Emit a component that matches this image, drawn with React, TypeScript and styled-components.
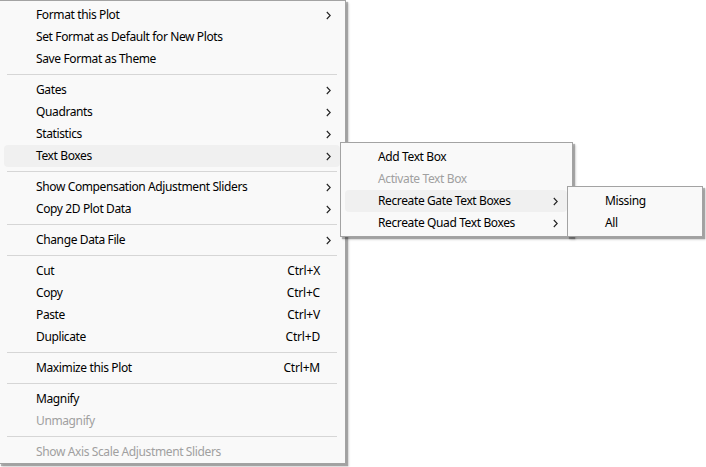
import React from "react";
import styled, { createGlobalStyle } from "styled-components";

const Global = createGlobalStyle`
  html, body { margin: 0; padding: 0; background: #ffffff; }
  body { width: 706px; height: 467px; overflow: hidden; }
  * { box-sizing: border-box; }
`;

const Canvas = styled.div`
  position: relative;
  width: 706px;
  height: 467px;
  background: #ffffff;
  font-family: "Segoe UI", "Noto Sans", "Open Sans", sans-serif;
  font-size: 12px;
  color: #000;
`;

const Menu = styled.div<{ $left: number; $top: number; $width: number; $pb?: number }>`
  position: absolute;
  left: ${(p) => p.$left}px;
  top: ${(p) => p.$top}px;
  width: ${(p) => p.$width}px;
  background: #f9f9f9;
  border: 1px solid #a3a3a3;
  box-shadow: 2px 2px 1px rgba(0, 0, 0, 0.28), 3px 3px 2px rgba(0, 0, 0, 0.12);
  padding: 3px 0 ${(p) => p.$pb ?? 0}px 0;
  display: flex;
  flex-direction: column;
`;

const Row = styled.div<{ $active?: boolean; $disabled?: boolean; $indent: number }>`
  height: 22px;
  margin: 0 5px 0 4px;
  border-radius: 4px;
  display: grid;
  grid-template-columns: 1fr auto 12px;
  align-items: center;
  padding-left: ${(p) => p.$indent}px;
  padding-right: 8px;
  background: ${(p) => (p.$active ? "#f0f0f0" : "transparent")};
  color: ${(p) => (p.$disabled ? "#a0a0a0" : "#000")};
  white-space: nowrap;
  line-height: 22px;
  letter-spacing: -0.38px;
`;

const Label = styled.span``;

const Shortcut = styled.span`
  text-align: right;
  letter-spacing: -0.2px;
`;

const ArrowCell = styled.span`
  display: flex;
  justify-content: flex-end;
  align-items: center;
  padding-right: 1px;
`;

const Separator = styled.div`
  height: 9px;
  display: flex;
  align-items: center;
  margin: 0 8px 0 7px;
  &::after {
    content: "";
    flex: 1;
    height: 1px;
    background: #d6d6d6;
  }
`;

const Chevron = () => (
  <svg width="5" height="9" viewBox="0 0 5 9">
    <path d="M0.8 1 L4.2 4.5 L0.8 8" fill="none" stroke="#222" strokeWidth="1.1" />
  </svg>
);

type Item =
  | { sep: true }
  | { sep?: false; label: string; sub?: boolean; shortcut?: string; disabled?: boolean; active?: boolean };

const mainItems: Item[] = [
  { label: "Format this Plot", sub: true },
  { label: "Set Format as Default for New Plots" },
  { label: "Save Format as Theme" },
  { sep: true },
  { label: "Gates", sub: true },
  { label: "Quadrants", sub: true },
  { label: "Statistics", sub: true },
  { label: "Text Boxes", sub: true, active: true },
  { sep: true },
  { label: "Show Compensation Adjustment Sliders", sub: true },
  { label: "Copy 2D Plot Data", sub: true },
  { sep: true },
  { label: "Change Data File", sub: true },
  { sep: true },
  { label: "Cut", shortcut: "Ctrl+X" },
  { label: "Copy", shortcut: "Ctrl+C" },
  { label: "Paste", shortcut: "Ctrl+V" },
  { label: "Duplicate", shortcut: "Ctrl+D" },
  { sep: true },
  { label: "Maximize this Plot", shortcut: "Ctrl+M" },
  { sep: true },
  { label: "Magnify" },
  { label: "Unmagnify", disabled: true },
  { sep: true },
  { label: "Show Axis Scale Adjustment Sliders", disabled: true },
];

const textBoxItems: Item[] = [
  { label: "Add Text Box" },
  { label: "Activate Text Box", disabled: true },
  { label: "Recreate Gate Text Boxes", sub: true, active: true },
  { label: "Recreate Quad Text Boxes", sub: true },
];

const gateItems: Item[] = [{ label: "Missing" }, { label: "All" }];

const Items = ({ items, indent }: { items: Item[]; indent: number }) => (
  <>
    {items.map((it, i) =>
      it.sep ? (
        <Separator key={i} />
      ) : (
        <Row key={i} $active={it.active} $disabled={it.disabled} $indent={indent}>
          <Label>{it.label}</Label>
          <Shortcut>{it.shortcut ?? ""}</Shortcut>
          <ArrowCell>{it.sub ? <Chevron /> : null}</ArrowCell>
        </Row>
      )
    )}
  </>
);

export default function App() {
  return (
    <Canvas>
      <Global />
      <Menu $left={-1} $top={0} $width={347}>
        <Items items={mainItems} indent={32} />
      </Menu>
      <Menu $left={340} $top={142} $width={233} $pb={2}>
        <Items items={textBoxItems} indent={33} />
      </Menu>
      <Menu $left={567} $top={186} $width={136} $pb={2}>
        <Items items={gateItems} indent={33} />
      </Menu>
    </Canvas>
  );
}
